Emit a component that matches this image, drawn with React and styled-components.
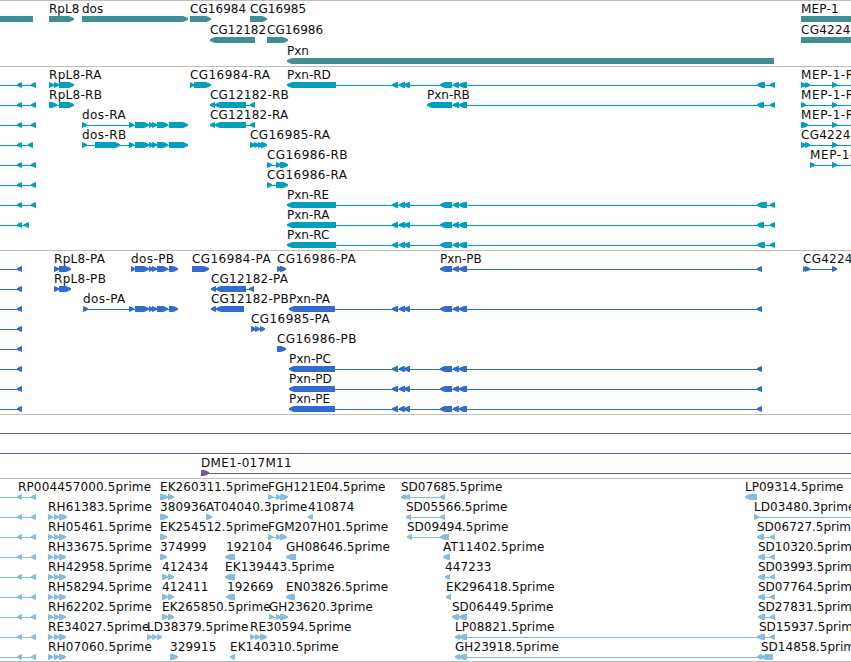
import React from "react";
import styled, { createGlobalStyle } from "styled-components";

const GlobalStyle = createGlobalStyle`
  html, body { margin: 0; padding: 0; background: #fff; }
`;

const Browser = styled.main`
  display: flex;
  flex-direction: column;
  width: 851px;
  height: 662px;
  overflow: hidden;
  background: #fff;
  color: #000;
  font-family: "DejaVu Sans", sans-serif;
  font-size: 12px;
`;

const Track = styled.section`
  display: flex;
  flex-direction: column;
  flex: none;
  box-sizing: border-box;
  border-top: 1px solid #bebebe;
  padding: ${(p) => p.$pad};
  color: ${(p) => p.$color};
`;

const Row = styled.div`
  position: relative;
  flex: none;
  height: ${(p) => p.$height}px;
  overflow: visible;
`;

const Label = styled.span`
  position: absolute;
  left: ${(p) => p.$x}px;
  bottom: 6px;
  height: 14px;
  line-height: 14px;
  letter-spacing: ${(p) => p.$spacing}px;
  white-space: pre;
  color: #0c0c0c;
`;

const Lane = styled.svg`
  display: block;
  position: absolute;
  left: 0;
  bottom: 0;
  width: 851px;
  height: 6px;
  fill: currentColor;
`;

const BottomRule = styled.div`
  flex: none;
  height: 1px;
  background: #bebebe;
`;

// A block is [start, end]; its tip takes up to five pixels at the strand's end.
function blockPoints([a, b], dir) {
  if (dir === "-") return `${a},0 ${b},0 ${b},6 ${a},6`;
  const tip = Math.min(5, b - a);
  const mid = tip * 0.55;
  return dir === "R"
    ? `${a},0 ${b - tip},0 ${b - tip + mid},1 ${b},2.3 ${b},3.7 ${b - tip + mid},5 ${b - tip},6 ${a},6`
    : `${b},0 ${a + tip},0 ${a + tip - mid},1 ${a},2.3 ${a},3.7 ${a + tip - mid},5 ${a + tip},6 ${b},6`;
}

function Feature({ dir, blocks, from, to }) {
  const start = from ?? blocks[0]?.[0] ?? 0;
  const end = to ?? blocks[blocks.length - 1]?.[1] ?? 851;
  return (
    <g>
      <rect x={start} y="3" width={end - start} height="1" />
      {blocks.map((b, i) => (
        <polygon key={i} points={blockPoints(b, dir)} />
      ))}
    </g>
  );
}

// Tracking of a label, by the family of names it belongs to.
const spacings = [
  [/^MEP-1-/, 0.6],
  [/^MEP-1$/, 0.2],
  [/^CG12182-/, 0.22],
  [/^CG4224/, 0.25],
  [/^CG\d+-/, 0.42],
  [/^CG\d+$/, 0.05],
  [/^dos-/, 0.4],
  [/^RpL8-/, 0.3],
  [/^DME1/, 0.3],
  [/^AT/, 0.17],
  [/^(FG|SD|LP093)/, 0],
  [/^(RH|RP)/, 0.14],
  [/^EK13/, 0.12],
  [/prime$/, 0.07],
  [/^\d+$/, 0.12],
];
const spacingOf = (name) => (spacings.find(([re]) => re.test(name)) || [null, 0])[1];

const f = (name, x, dir, blocks, extra = {}) => ({ name, x, dir, blocks, ...extra });

const genes = [
  [
    f("", 0, "-", [[0, 33]]),
    f("RpL8", 49, "R", [[49, 74]]),
    f("dos", 82, "R", [[82, 188]]),
    f("CG16984", 190, "R", [[190, 211]]),
    f("CG16985", 250, "R", [[250, 267]]),
    f("MEP-1", 801, "-", [[801, 851]]),
  ],
  [
    f("CG12182", 210, "L", [[210, 255]]),
    f("CG16986", 267, "R", [[267, 288]]),
    f("CG4224", 801, "-", [[801, 851]]),
  ],
  [f("Pxn", 287, "L", [[287, 774]])],
];

const left = (a = 31, b = 36) => f("", 0, "L", [[17, 22], [a, b]], { from: 0 });
const leftShort = f("", 0, "L", [[17, 22]], { from: 0 });
const mid = [[392, 398], [399, 405], [404, 410], [440, 452], [453, 459], [459, 467]];
const pxnR = (name, end) =>
  f(name, 287, "L", [[287, 336], ...mid, [757, end], [770, 775]]);
const pxnP = (name) => f(name, 289, "L", [[289, 335], ...mid, [757, 762]]);
const dosTail = [[129, 134], [135, 149], [149, 153], [152, 157], [157, 168]];
const mep = (name, x, blocks) => f(name, x, "R", [...blocks, [832, 837]], { to: 851 });
const rb12182 = [[210, 215], [215, 246], [250, 255]];

const transcripts = [
  [
    left(),
    f("RpL8-RA", 49, "R", [[49, 54], [54, 59], [59, 74]]),
    f("CG16984-RA", 190, "R", [[190, 194], [194, 211]]),
    pxnR("Pxn-RD", 765),
    mep("MEP-1-RA", 801, [[801, 806], [805, 810]]),
  ],
  [
    left(),
    f("RpL8-RB", 49, "R", [[49, 57], [59, 74]]),
    f("CG12182-RB", 210, "L", rb12182),
    f("Pxn-RB", 427, "L", [[427, 452], [453, 459], [459, 467], [757, 764], [770, 775]]),
    mep("MEP-1-RB", 801, [[801, 806]]),
  ],
  [
    left(),
    f("dos-RA", 82, "R", [[82, 87], ...dosTail, [169, 188]]),
    f("CG12182-RA", 210, "L", rb12182),
    mep("MEP-1-RC", 801, [[801, 808]]),
  ],
  [
    left(28, 33),
    f("dos-RB", 82, "R", [[82, 87], [95, 120], ...dosTail, [169, 188]]),
    f("CG16985-RA", 250, "R", [[250, 255], [254, 259], [258, 263], [261, 267]]),
    mep("CG4224-RA", 801, [[801, 806], [805, 810]]),
  ],
  [
    left(),
    f("CG16986-RB", 267, "R", [[267, 272], [276, 281], [280, 288]]),
    mep("MEP-1-RD", 810, [[810, 815]]),
  ],
  [left(), f("CG16986-RA", 267, "R", [[267, 272], [276, 288]])],
  [left(), pxnR("Pxn-RE", 767)],
  [left(24, 29), pxnR("Pxn-RA", 764)],
  [pxnR("Pxn-RC", 765)],
];

const proteins = [
  [
    leftShort,
    f("RpL8-PA", 54, "R", [[54, 59], [59, 71]]),
    f("dos-PB", 131, "R", [[131, 135], ...dosTail.slice(1), [169, 178]]),
    f("CG16984-PA", 192, "R", [[192, 209]]),
    f("CG16986-PA", 277, "R", [[277, 282], [280, 286]]),
    f("Pxn-PB", 440, "L", [[440, 452], [453, 459], [459, 467], [757, 762]]),
    f("CG4224-PA", 803, "R", [[803, 806], [805, 810], [832, 837]]),
  ],
  [
    leftShort,
    f("RpL8-PB", 54, "R", [[54, 59], [59, 71]]),
    f("CG12182-PA", 211, "L", [[211, 216], [216, 246], [249, 254]]),
  ],
  [
    leftShort,
    f("dos-PA", 83, "R", [[83, 88], ...dosTail, [169, 178]]),
    f("CG12182-PB", 211, "L", [[211, 216], [216, 244]]),
    pxnP("Pxn-PA"),
  ],
  [leftShort, f("CG16985-PA", 251, "R", [[251, 256], [255, 260], [260, 265]])],
  [leftShort, f("CG16986-PB", 277, "R", [[277, 286]])],
  [leftShort, pxnP("Pxn-PC")],
  [leftShort, pxnP("Pxn-PD")],
  [leftShort, pxnP("Pxn-PE")],
];

const clones = [
  [f("", 0, "R", [])],
  [f("", 0, "R", [])],
  [f("DME1-017M11", 201, "R", [[201, 209]], { to: 851 })],
];

const rh = (name, end = 66) => f(name, 48, "R", [[48, 53], [54, 59], [59, end]]);
const pair = (name) => f(name, 162, "R", [[162, 168], [168, 174]]);
const sd = (name, x = 758, a = 758) => f(name, x, "L", [[a, a + 7], [770, 775]]);

const ests = [
  [
    { ...left(), name: "RP004457000.5prime", x: 18 },
    f("EK260311.5prime", 160, "R", [[160, 168], [168, 174]]),
    f("FGH121E04.5prime", 268, "R", [[268, 273], [276, 281], [280, 288]]),
    f("SD07685.5prime", 401, "L", [[401, 406], [405, 410], [440, 445]]),
    f("LP09314.5prime", 745, "L", [[745, 757]]),
  ],
  [
    left(),
    rh("RH61383.5prime", 67),
    f("380936", 160, "R", [[160, 168]]),
    f("AT04040.3prime", 206, "R", [[206, 212]]),
    f("410874", 308, "L", [[308, 313]]),
    f("SD05566.5prime", 406, "L", [[406, 411], [440, 445]]),
    f("LD03480.3prime", 754, "R", [[754, 759]], { to: 851 }),
  ],
  [
    left(),
    rh("RH05461.5prime"),
    f("EK254512.5prime", 160, "R", [[160, 167]]),
    f("FGM207H01.5prime", 268, "R", [[268, 273], [276, 281], [280, 287]]),
    f("SD09494.5prime", 407, "L", [[407, 412], [440, 449]]),
    sd("SD06727.5prime", 757, 757),
  ],
  [
    left(),
    rh("RH33675.5prime"),
    f("374999", 160, "R", [[160, 167]]),
    f("192104", 226, "L", [[225, 235]]),
    f("GH08646.5prime", 286, "L", [[286, 296]]),
    f("AT11402.5prime", 443, "L", [[443, 450]]),
    sd("SD10320.5prime"),
  ],
  [
    left(),
    rh("RH42958.5prime"),
    pair("412434"),
    f("EK139443.5prime", 225, "L", [[225, 235]]),
    f("447233", 445, "L", [[445, 450]]),
    sd("SD03993.5prime"),
  ],
  [
    left(),
    rh("RH58294.5prime"),
    pair("412411"),
    f("192669", 227, "L", [[226, 235]]),
    f("EN03826.5prime", 286, "L", [[286, 295]]),
    f("EK296418.5prime", 446, "L", [[446, 451]]),
    sd("SD07764.5prime"),
  ],
  [
    left(),
    rh("RH62202.5prime"),
    pair("EK265850.5prime"),
    f("GH23620.3prime", 269, "R", [[269, 274], [276, 281], [280, 288]]),
    f("SD06449.5prime", 452, "L", [[452, 459], [459, 467]]),
    sd("SD27831.5prime"),
  ],
  [
    left(),
    rh("RE34027.5prime"),
    f("LD38379.5prime", 147, "R", [[147, 152], [152, 157], [157, 162]]),
    f("RE30594.5prime", 250, "R", [[250, 255], [255, 260], [260, 267]]),
    f("LP08821.5prime", 455, "L", [[455, 460], [459, 467], [757, 762], [761, 765]]),
    sd("SD15937.5prime", 759, 758),
  ],
  [
    left(),
    rh("RH07060.5prime"),
    f("329915", 170, "R", [[170, 178]]),
    f("EK140310.5prime", 230, "L", [[230, 235]]),
    f("GH23918.5prime", 455, "L", [[455, 460], [459, 467], [757, 762]]),
    f("SD14858.5prime", 761, "L", [[761, 773]]),
  ],
];

const tracks = [
  { id: "genes", color: "#3f8f94", pad: "0 0 2px", height: 21, rows: genes },
  { id: "transcripts", color: "#009fbf", pad: "1px 0 2px", height: 20, rows: transcripts },
  { id: "proteins", color: "#316ccc", pad: "1px 0 2px", height: 20, rows: proteins },
  { id: "clones", color: "#7355a8", pad: "1px 0 2px", height: 20, rows: clones },
  { id: "ests", color: "#88bcde", pad: "1px 0 1px", height: 20, rows: ests },
];

export default function App() {
  return (
    <Browser>
      <GlobalStyle />
      {tracks.map((t) => (
        <Track key={t.id} $color={t.color} $pad={t.pad}>
          {t.rows.map((features, i) => (
            <Row key={i} $height={t.height}>
              <Lane viewBox="0 0 851 6">
                {features.map((ft, j) => (
                  <Feature key={j} {...ft} />
                ))}
              </Lane>
              {features
                .filter((ft) => ft.name)
                .map((ft) => (
                  <Label key={ft.name} $x={ft.x} $spacing={spacingOf(ft.name)}>
                    {ft.name}
                  </Label>
                ))}
            </Row>
          ))}
        </Track>
      ))}
      <BottomRule />
    </Browser>
  );
}
